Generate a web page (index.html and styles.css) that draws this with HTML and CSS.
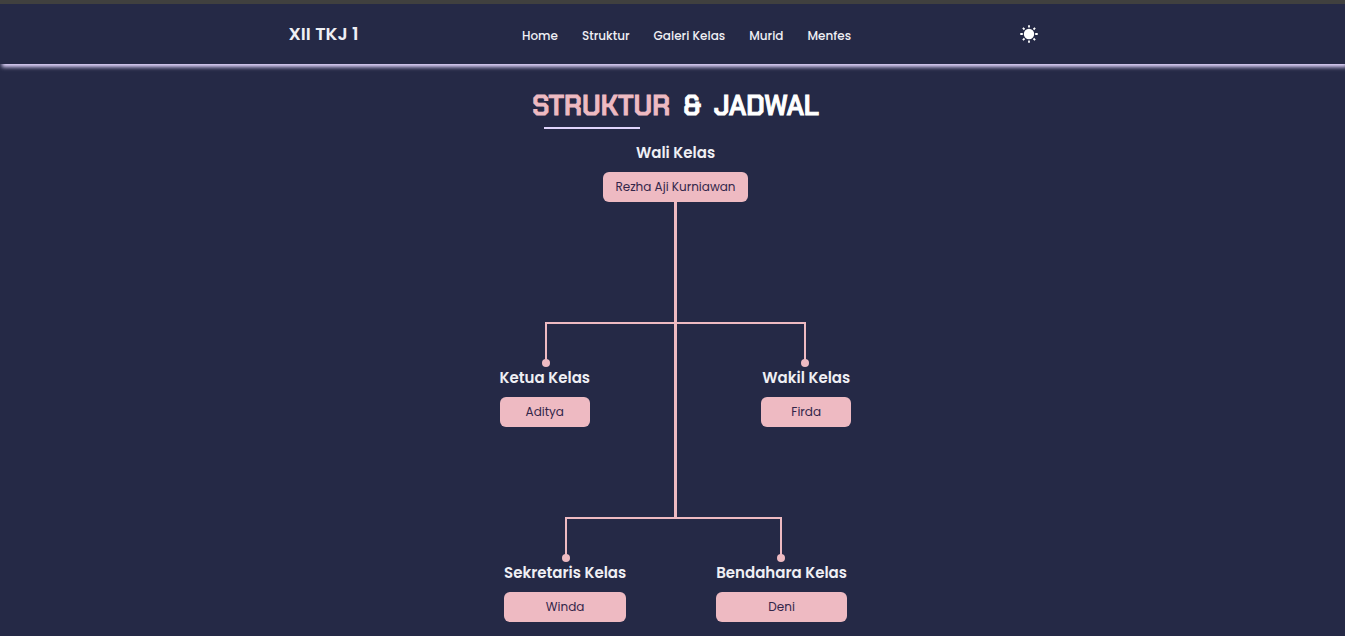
FILE: index.html
```html
<!DOCTYPE html>
<html lang="id">
<head>
<meta charset="utf-8">
<meta name="viewport" content="width=device-width, initial-scale=1">
<title>XII TKJ 1</title>
<link rel="stylesheet" href="styles.css">
</head>
<body>
<header class="header">
  <nav class="nav">
    <a class="brand" href="#">XII TKJ 1</a>
    <ul class="menu">
      <li><a href="#home">Home</a></li>
      <li><a href="#struktur">Struktur</a></li>
      <li><a href="#galeri">Galeri Kelas</a></li>
      <li><a href="#murid">Murid</a></li>
      <li><a href="#menfes">Menfes</a></li>
    </ul>
    <button class="theme" type="button" aria-label="Ganti tema">
      <svg viewBox="0 0 18 18" width="18" height="18" aria-hidden="true">
        <circle cx="9" cy="9" r="5.2" fill="#fff"/>
        <path d="M9 .3v2.2M9 15.5v2.2M.3 9h2.5M15.2 9h2.5M2.9 2.9l1.6 1.6M13.5 13.5l1.6 1.6M2.9 15.1l1.6-1.6M13.5 4.5l1.6-1.6" stroke="#fff" stroke-width="1.8" fill="none"/>
      </svg>
    </button>
  </nav>
</header>
<main class="main" id="struktur">
  <h1 class="title"><span class="accent">STRUKTUR</span><span>&amp;</span><span>JADWAL</span></h1>
  <section class="tree">
    <div class="node">
      <h2 class="role">Wali Kelas</h2>
      <p class="name">Rezha Aji Kurniawan</p>
    </div>
    <div class="trunk trunk-top"></div>
    <div class="level level-leads">
      <div class="node lead">
        <div class="branch branch-left"></div>
        <h2 class="role">Ketua Kelas</h2>
        <p class="name">Aditya</p>
      </div>
      <div class="trunk"></div>
      <div class="node lead">
        <div class="branch branch-right"></div>
        <h2 class="role">Wakil Kelas</h2>
        <p class="name">Firda</p>
      </div>
    </div>
    <div class="level level-staff">
      <div class="node">
        <div class="branch branch-left"></div>
        <h2 class="role">Sekretaris Kelas</h2>
        <p class="name">Winda</p>
      </div>
      <div class="node">
        <div class="branch branch-right"></div>
        <h2 class="role">Bendahara Kelas</h2>
        <p class="name">Deni</p>
      </div>
    </div>
  </section>
</main>
</body>
</html>
```
FILE: styles.css
```css
:root {
  --bg: #252946;
  --pink: #eebac2;
  --lavender: #e0d4fc;
  --text: #efeff4;
}

* {
  box-sizing: border-box;
  margin: 0;
  padding: 0;
}

body {
  background: var(--bg);
  color: var(--text);
  font-family: Poppins, Inter, sans-serif;
  border-top: 4px solid #40403f;
}

a {
  color: inherit;
  text-decoration: none;
}

.header {
  background: var(--bg);
  box-shadow: 2px 3px 4px var(--lavender);
}

.nav {
  display: grid;
  grid-template-columns: 1fr auto 1fr;
  align-items: center;
  max-width: 768px;
  height: 60px;
  margin: 0 auto;
}

.brand {
  padding-bottom: 2px;
  font-size: 18px;
  font-weight: 600;
}

.menu {
  display: flex;
  gap: 24px;
  padding: 4px 0 0 28px;
  font-size: 12px;
  font-weight: 500;
  list-style: none;
}

.theme {
  display: flex;
  justify-self: end;
  margin-right: 19px;
  border: 0;
  background: none;
}

.main {
  padding: 24px 0 14px 6px;
}

.title {
  position: relative;
  display: flex;
  gap: 13px;
  width: fit-content;
  margin: 0 auto 16px;
  color: #fff;
  font-family: "Chakra Petch", Roboto, sans-serif;
  font-size: 27px;
  font-weight: 600;
  line-height: 36px;
  -webkit-text-stroke: 1px;
}

.title::after {
  content: "";
  position: absolute;
  left: 12px;
  bottom: -5px;
  width: 96px;
  height: 2px;
  background: var(--lavender);
}

.accent {
  color: var(--pink);
}

.tree {
  display: flex;
  flex-direction: column;
  align-items: center;
}

.node {
  text-align: center;
}

.role {
  margin-bottom: 7px;
  padding-top: 1px;
  font-size: 15px;
  font-weight: 600;
  line-height: 24px;
  white-space: nowrap;
}

.name {
  padding: 6px 12px;
  border-radius: 6px;
  background: var(--pink);
  color: #33264a;
  font-size: 12px;
  line-height: 18px;
}

.trunk {
  width: 3px;
  background: var(--pink);
}

.trunk-top {
  height: 120px;
}

.level {
  --gap: 90px;
  display: grid;
  column-gap: var(--gap);
}

.level-leads {
  --gap: 84px;
  grid-template-columns: 1fr auto 1fr;
}

.level-staff {
  grid-template-columns: auto auto;
}

.lead {
  padding-bottom: 90px;
}

.branch {
  position: relative;
  height: 43px;
  border: 0 solid var(--pink);
  border-top-width: 2px;
}

.branch-left {
  margin-left: 50%;
  margin-right: calc(var(--gap) / -2);
  border-left-width: 2px;
}

.branch-right {
  margin-right: 50%;
  margin-left: calc(var(--gap) / -2);
  border-right-width: 2px;
}

.level-leads .branch-left {
  margin-right: calc(var(--gap) * -1);
}

.level-leads .branch-right {
  margin-left: calc(var(--gap) * -1);
}

.branch::after {
  content: "";
  position: absolute;
  bottom: -2px;
  width: 8px;
  height: 8px;
  border-radius: 50%;
  background: var(--pink);
}

.branch-left::after {
  left: -5px;
}

.branch-right::after {
  right: -5px;
}
```
